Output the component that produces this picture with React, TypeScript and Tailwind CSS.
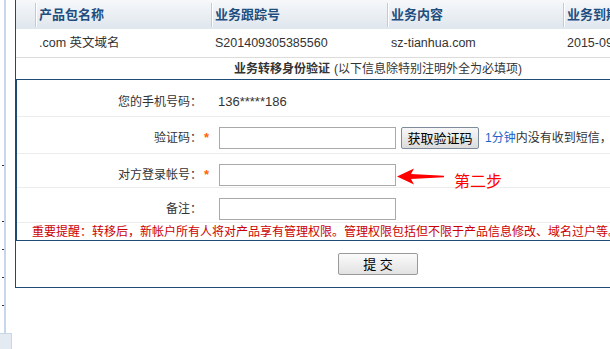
import React from "react";

// Header columns of the product table
const columns = ["产品包名称", "业务跟踪号", "业务内容", "业务到期时间"];
const rowData = [".com 英文域名", "S201409305385560", "sz-tianhua.com", "2015-09-30"];

function Arrow() {
  return (
    <svg width="48" height="17" viewBox="0 0 48 17" className="shrink-0">
      <path d="M0 8.5 L17 0.5 L14 6 L47 7.8 L47 9.2 L14 11 L17 16.5 Z" fill="#ff0000" />
    </svg>
  );
}

function FormRow({
  label,
  required,
  h,
  pt,
  last,
  children,
}: {
  label: string;
  required?: boolean;
  h: string;
  pt: string;
  last?: boolean;
  children?: React.ReactNode;
}) {
  return (
    <div className={`flex items-start ${h} ${pt} ${last ? "" : "border-b border-[#ececec]"}`}>
      <div className="flex items-center h-[22px]">
        <span className="w-[185px] text-right text-[12px] text-[#333]">{label}</span>
        <span className="w-[17px] pl-[2px] text-[13px] font-bold text-[#ff6600]">{required ? "*" : ""}</span>
      </div>
      <div className="flex items-start">{children}</div>
    </div>
  );
}

export default function App() {
  return (
    <div className="w-[610px] h-[349px] overflow-hidden bg-white flex font-['Liberation_Sans','Noto_Sans_CJK_SC',sans-serif]">
      {/* left frame strip */}
      <div className="w-[15px] shrink-0 flex flex-col">
        <div className="h-[333px] flex">
          <div className="w-[2px] ml-[2px] flex flex-col">
            <div className="h-px mt-[165px] bg-[#333]" />
            <div className="h-px mt-[55px] bg-[#333]" />
            <div className="h-px mt-[27px] bg-[#333]" />
            <div className="h-px mt-[27px] bg-[#333]" />
            <div className="h-px mt-[27px] bg-[#333]" />
          </div>
          <div className="w-[2px] bg-[#c6d7ec]" />
        </div>
        <div className="h-[16px] w-[12px] bg-[#e3eaf2] border-t border-r border-[#c9d6e4]" />
      </div>

      <div className="w-[725px] shrink-0">
        {/* product table */}
        <div className="border-l border-[#1c4b75]">
          <div className="h-[29px] flex bg-gradient-to-b from-[#f6f8fa] to-[#dfe6ed]">
            <div className="w-[19px]" />
            {columns.map((c) => (
              <div key={c} className="w-[176px] flex items-center">
                <div className="w-px h-[24px] bg-[#c2cbd5]" />
                <div className="w-px h-[24px] bg-white" />
                <span className="ml-[2px] text-[13px] font-bold text-[#1f4d7e] whitespace-nowrap">{c}</span>
              </div>
            ))}
          </div>
          <div className="h-[29px] flex items-center border-b border-[#dcdcdc]">
            <div className="w-[19px]" />
            {rowData.map((d) => (
              <div key={d} className="w-[176px] pl-[4px] text-[12.5px] text-[#333] whitespace-nowrap">
                {d}
              </div>
            ))}
          </div>
          <div className="h-[21px] flex items-center justify-center text-[12px] text-[#333]">
            <span className="font-bold">业务转移身份验证</span>
            <span className="ml-[4px]">(以下信息除特别注明外全为必填项)</span>
          </div>
        </div>

        {/* verification form */}
        <div className="border-t border-b border-l-2 border-[#1c4b75]">
          <div className="h-[37px] pt-[15px] flex border-b border-[#ececec] text-[12px] text-[#333] leading-[14px]">
            <span className="w-[185px] text-right">您的手机号码：</span>
            <span className="ml-[16px] text-[13px]">136*****186</span>
          </div>
          <FormRow label="验证码：" required h="h-[37px]" pt="pt-[10px]">
            <input className="w-[177px] h-[22px] border border-[#a9a9a9] bg-white outline-none" />
            <button className="ml-[5px] w-[78px] h-[22px] border border-[#7d8c9c] rounded-[2px] bg-gradient-to-b from-[#f7f7f7] to-[#dcdcdc] text-[13px] text-black leading-none">
              获取验证码
            </button>
            <span className="ml-[6px] h-[22px] flex items-center text-[12px] whitespace-nowrap">
              <span className="text-[#1f63c6]">1分钟</span>
              <span className="text-[#333]">内没有收到短信，</span>
            </span>
          </FormRow>
          <FormRow label="对方登录帐号：" required h="h-[34px]" pt="pt-[10px]">
            <input className="w-[177px] h-[22px] border border-[#a9a9a9] bg-white outline-none" />
            <div className="ml-px mt-[4px]">
              <Arrow />
            </div>
            <span className="ml-[9px] mt-[9px] text-[16px] leading-[18px] text-[#ff0000]">第二步</span>
          </FormRow>
          <FormRow label="备注：" h="h-[35px]" pt="pt-[10px]">
            <input className="w-[177px] h-[22px] border border-[#a9a9a9] bg-white outline-none" />
          </FormRow>
          <div className="h-[17px] pl-[15px] flex items-center text-[12px] text-[#cc0000] whitespace-nowrap">
            重要提醒：转移后，新帐户所有人将对产品享有管理权限。管理权限包括但不限于产品信息修改、域名过户等。
          </div>
        </div>

        {/* submit */}
        <div className="h-[47px] pt-[12px] flex justify-center border-l border-b border-[#1c4b75]">
          <button className="w-[80px] h-[22px] border border-[#9a9a9a] rounded-[2px] bg-gradient-to-b from-[#fbfbfb] to-[#e2e2e2] text-[13px] text-black leading-none">
            提 交
          </button>
        </div>
      </div>
    </div>
  );
}
